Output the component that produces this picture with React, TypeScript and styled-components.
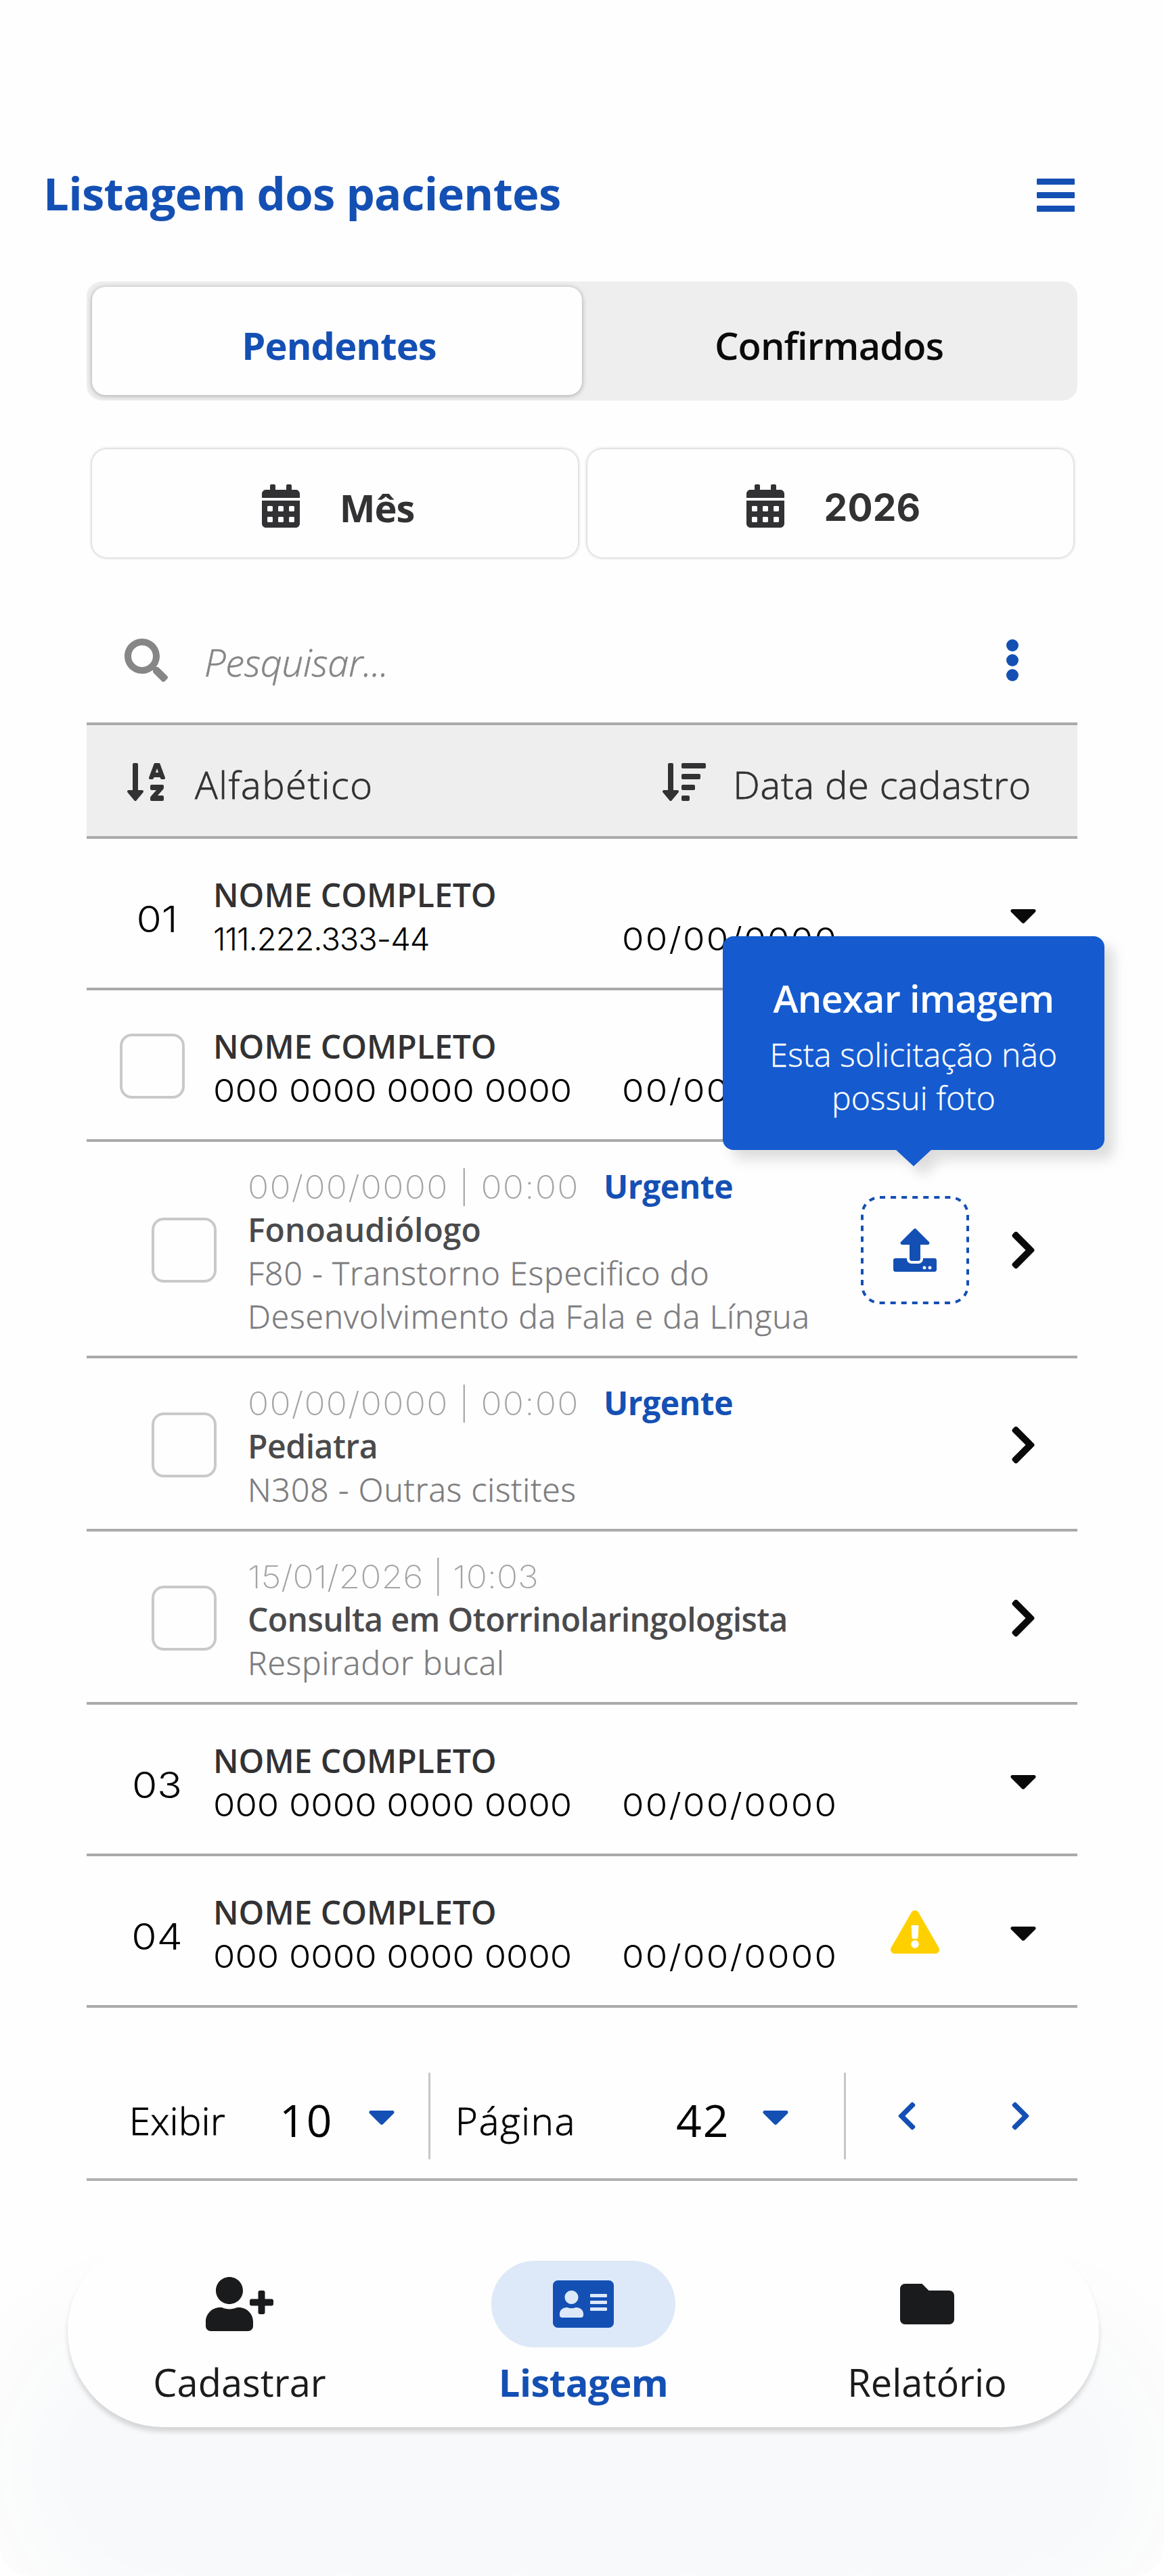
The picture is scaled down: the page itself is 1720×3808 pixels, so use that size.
import React from "react";
import styled, { createGlobalStyle } from "styled-components";
import {
  FaAddressCard,
  FaCalendarAlt,
  FaCaretDown,
  FaChevronLeft,
  FaChevronRight,
  FaExclamationTriangle,
  FaFolder,
  FaSearch,
  FaSortAlphaDown,
  FaSortAmountDown,
  FaUpload,
  FaUserPlus,
} from "react-icons/fa";

const color = {
  primary: "#1450b4",
  tooltip: "#155bcf",
  ink: "#323234",
  soft: "#4a4a4c",
  muted: "#757577",
  faint: "#a9a9a9",
  rule: "#aaaaaa",
  surface: "#eeeeee",
};

const text = `"Open Sans", "Noto Sans", sans-serif`;
const digits = `Inter, "Open Sans", sans-serif`;

const GlobalStyle = createGlobalStyle`
  *, *::before, *::after { box-sizing: border-box; }
  body { margin: 0; background: #fff; font-family: ${text}; color: #000; }
  button { border: 0; background: none; padding: 0; margin: 0; font: inherit; color: inherit; }
`;

const Page = styled.div`
  display: flex;
  flex-direction: column;
  width: 1720px;
  height: 3808px;
  overflow: hidden;
  background: #fefefe;
  border-radius: 0 0 44px 44px;
`;

const Header = styled.header`
  display: flex;
  align-items: center;
  justify-content: space-between;
  height: 324px;
  padding: 246px 132px 0 64px;
`;

const Title = styled.h1`
  margin: 0;
  font-size: 67px;
  line-height: 80px;
  font-weight: 700;
  letter-spacing: -0.69px;
  color: ${color.primary};
`;

const MenuButton = styled.button`
  display: flex;
  flex-direction: column;
  gap: 11px;
  margin-top: 6px;
  span {
    width: 56px;
    height: 9px;
    border-radius: 1px;
    background: ${color.primary};
  }
`;

const Content = styled.main`
  display: flex;
  flex-direction: column;
  margin: 92px 128px 0;
`;

const Tabs = styled.div`
  display: grid;
  grid-template-columns: 1fr 1fr;
  height: 176px;
  padding: 8px;
  border-radius: 22px;
  background: ${color.surface};
`;

const Tab = styled.button<{ $active?: boolean }>`
  padding: 12px 0 0 6px;
  border-radius: 20px;
  font-size: 56px;
  line-height: 76px;
  font-weight: ${(p) => (p.$active ? 700 : 600)};
  letter-spacing: ${(p) => (p.$active ? "-0.9px" : "-0.85px")};
  color: ${(p) => (p.$active ? color.primary : "#0b0b0b")};
  background: ${(p) => (p.$active ? "#fefefe" : "transparent")};
  box-shadow: ${(p) => (p.$active ? "0 1px 7px rgba(0, 0, 0, 0.32)" : "none")};
`;

const Filters = styled.div`
  display: grid;
  grid-template-columns: 718px 718px;
  gap: 14px;
  margin: 72px 0 0 8px;
`;

const FilterButton = styled.button`
  display: flex;
  align-items: center;
  justify-content: center;
  gap: 59px;
  height: 160px;
  padding: 8px 0 0 9px;
  border-radius: 22px;
  background: #fefefe;
  box-shadow: 0 0 5px rgba(0, 0, 0, 0.3);
  color: ${color.ink};
  svg {
    width: 56px;
    height: 64px;
  }
`;

const FilterLabel = styled.span<{ $digits?: boolean }>`
  padding-top: 4px;
  font-family: ${(p) => (p.$digits ? digits : text)};
  font-size: ${(p) => (p.$digits ? 55 : 56)}px;
  font-weight: ${(p) => (p.$digits ? 650 : 700)};
  letter-spacing: ${(p) => (p.$digits ? "0.2px" : "-1px")};
`;

const SearchBar = styled.div`
  display: flex;
  align-items: center;
  height: 184px;
  margin-top: 60px;
  padding: 0 87px 0 56px;
  > svg {
    width: 64px;
    height: 64px;
    color: #868686;
  }
`;

const SearchHint = styled.span`
  flex: 1;
  padding: 4px 0 0 54px;
  font-size: 56px;
  font-style: italic;
  font-weight: 300;
  -webkit-text-stroke: 0.6px currentColor;
  letter-spacing: -0.1px;
  color: #868686;
`;

const MoreButton = styled.button`
  display: flex;
  flex-direction: column;
  gap: 4px;
  span {
    width: 18px;
    height: 18px;
    border-radius: 50%;
    background: ${color.primary};
  }
`;

const SortBar = styled.div`
  display: flex;
  align-items: center;
  height: 172px;
  padding: 4px 68px 0 60px;
  border-top: 4px solid ${color.rule};
  border-bottom: 4px solid ${color.rule};
  background: ${color.surface};
`;

const SortOption = styled.button<{ $iconWidth: number; $gap: number; $spacing: number }>`
  display: flex;
  align-items: center;
  gap: ${(p) => p.$gap}px;
  font-size: 56px;
  font-weight: 300;
  -webkit-text-stroke: 0.8px currentColor;
  letter-spacing: ${(p) => p.$spacing}px;
  white-space: nowrap;
  color: ${color.ink};
  &:last-child {
    margin-left: auto;
  }
  svg {
    width: ${(p) => p.$iconWidth}px;
    height: 64px;
  }
  span {
    padding-top: 5px;
  }
`;

const PatientRow = styled.div`
  display: grid;
  grid-template-columns: 187px 604px 353px 160px 160px;
  align-items: center;
  height: 224px;
  border-bottom: 4px solid ${color.rule};
`;

const Lead = styled.div<{ $inset?: boolean }>`
  padding: ${(p) => (p.$inset ? "4px 0 0 96px" : "4px 0 0 49px")};
`;

const RowNumber = styled.div`
  margin: 16px 0 0 21px;
  text-align: center;
  font-family: ${digits};
  font-size: 54px;
  font-weight: 300;
  transform: scaleX(1.12);
`;

const Checkbox = styled.div`
  width: 96px;
  height: 96px;
  border: 4px solid #c9c9c9;
  border-radius: 18px;
  background: #fefefe;
`;

const Lines = styled.div<{ $top: number }>`
  display: flex;
  flex-direction: column;
  padding-top: ${(p) => p.$top}px;
`;

const PatientName = styled.div`
  font-size: 48px;
  line-height: 64px;
  font-weight: 600;
  color: ${color.ink};
`;

const Digits = styled.div<{ $spacing: number; $stretch?: number }>`
  height: 64px;
  font-family: ${digits};
  font-size: 47px;
  line-height: 65px;
  font-weight: 300;
  letter-spacing: ${(p) => p.$spacing}px;
  white-space: nowrap;
  transform: scaleX(${(p) => p.$stretch ?? 1});
  transform-origin: left;
`;

const RegisterDate = styled(Digits)`
  margin-top: 73px;
`;

const IconCell = styled.div<{ $w: number; $h: number; $color?: string }>`
  position: relative;
  display: flex;
  align-items: center;
  justify-content: center;
  padding-top: 4px;
  color: ${(p) => p.$color ?? "#0a0a0a"};
  > svg {
    width: ${(p) => p.$w}px;
    height: ${(p) => p.$h}px;
  }
`;

const RequestRow = styled.div<{ $height: number }>`
  display: grid;
  grid-template-columns: 238px 906px 160px 160px;
  align-items: center;
  height: ${(p) => p.$height}px;
  border-bottom: 4px solid ${color.rule};
`;

const RequestHead = styled.div`
  display: flex;
  gap: 27px;
  height: 64px;
`;

const RequestDate = styled(Digits)`
  flex: 0 0 499px;
  font-weight: 250;
  color: #a4a4a4;
`;

const Urgent = styled.span`
  font-size: 48px;
  line-height: 64px;
  font-weight: 700;
  letter-spacing: -0.45px;
  color: ${color.primary};
`;

const Specialty = styled.div<{ $spacing: number }>`
  font-size: 48px;
  line-height: 64px;
  font-weight: 600;
  letter-spacing: ${(p) => p.$spacing}px;
  white-space: nowrap;
  color: ${color.soft};
`;

const Diagnosis = styled.div`
  font-size: 48px;
  line-height: 64px;
  font-weight: 300;
  -webkit-text-stroke: 0.6px currentColor;
  letter-spacing: 0.95px;
  white-space: nowrap;
  color: #7c7c7e;
`;

const UploadButton = styled.button`
  display: grid;
  place-items: center;
  width: 160px;
  height: 160px;
  color: ${color.primary};
  > svg {
    grid-area: 1 / 1;
  }
  > svg:last-child {
    width: 64px;
    height: 64px;
  }
`;

const Tooltip = styled.div`
  position: absolute;
  z-index: 2;
  right: -200px;
  bottom: calc(100% + 64px);
  width: 564px;
  height: 316px;
  padding-top: 51px;
  border-radius: 16px;
  background: ${color.tooltip};
  color: #fff;
  text-align: center;
  filter: drop-shadow(14px 14px 9px rgba(0, 0, 0, 0.13));
  &::after {
    content: "";
    position: absolute;
    top: calc(100% - 1px);
    left: 255px;
    border: 27px solid transparent;
    border-top: 25px solid ${color.tooltip};
    border-bottom: 0;
  }
`;

const TooltipTitle = styled.div`
  font-size: 56px;
  line-height: 80px;
  font-weight: 600;
  letter-spacing: -0.78px;
`;

const TooltipText = styled.div`
  margin-top: 12px;
  font-size: 48px;
  line-height: 64px;
  font-weight: 300;
  -webkit-text-stroke: 0.4px currentColor;
  letter-spacing: 0.2px;
`;

const Pager = styled.div`
  display: flex;
  height: 256px;
  padding: 96px 0 28px;
  border-bottom: 4px solid #b0b0b0;
`;

const PagerGroup = styled.div<{ $width: number; $start: number }>`
  display: flex;
  align-items: center;
  flex: 0 0 ${(p) => p.$width}px;
  padding-left: ${(p) => p.$start}px;
  border-right: 3px solid #c6c6c6;
  > svg {
    width: 40px;
    height: 64px;
    color: ${color.primary};
  }
`;

const PagerLabel = styled.span<{ $width: number; $spacing: number }>`
  width: ${(p) => p.$width}px;
  padding-top: 11px;
  font-size: 56px;
  font-weight: 300;
  -webkit-text-stroke: 0.8px currentColor;
  letter-spacing: ${(p) => p.$spacing}px;
`;

const PagerValue = styled.span<{ $width: number }>`
  width: ${(p) => p.$width}px;
  padding-top: 10px;
  font-size: 66px;
  line-height: 80px;
  font-weight: 400;
  letter-spacing: 2px;
`;

const PagerArrows = styled.div`
  display: flex;
  align-items: center;
  gap: 104px;
  padding-left: 58px;
  color: ${color.primary};
  svg {
    width: 64px;
    height: 48px;
  }
`;

const BottomNav = styled.nav`
  display: grid;
  grid-template-columns: repeat(3, 1fr);
  flex: none;
  width: 1524px;
  height: 284px;
  margin: 80px 0 0 100px;
  padding-top: 38px;
  border-radius: 142px;
  background: #fefefe;
  box-shadow:
    0 7px 7px rgba(0, 0, 0, 0.14),
    0 200px 160px 110px rgba(20, 60, 120, 0.026);
`;

const NavItem = styled.button<{ $active?: boolean }>`
  display: flex;
  flex-direction: column;
  align-items: center;
  gap: 18px;
  color: ${(p) => (p.$active ? color.primary : "#1a1b1c")};
`;

const NavIcon = styled.span<{ $active?: boolean; $width: number }>`
  display: flex;
  align-items: center;
  justify-content: center;
  width: 272px;
  height: 128px;
  border-radius: 64px;
  background: ${(p) => (p.$active ? "#dde9f9" : "transparent")};
  svg {
    width: ${(p) => p.$width}px;
    height: 80px;
  }
`;

const NavLabel = styled.span<{ $active?: boolean }>`
  padding-top: 1px;
  font-size: 56px;
  line-height: 64px;
  font-weight: ${(p) => (p.$active ? 700 : 400)};
  letter-spacing: ${(p) => (p.$active ? "-0.5px" : "0")};
`;

type PatientProps = {
  number?: string;
  document: string;
  spacing?: number;
  stretch?: number;
  alert?: boolean;
};

function Patient({ number, document, spacing = 0, stretch = 1.116, alert }: PatientProps) {
  return (
    <PatientRow>
      {number ? <RowNumber>{number}</RowNumber> : <Lead><Checkbox /></Lead>}
      <Lines $top={10}>
        <PatientName>NOME COMPLETO</PatientName>
        <Digits $spacing={spacing} $stretch={stretch}>{document}</Digits>
      </Lines>
      <RegisterDate $spacing={2} $stretch={1.12}>00/00/0000</RegisterDate>
      <IconCell $w={72} $h={64} $color="#ffd000">{alert && <FaExclamationTriangle />}</IconCell>
      <IconCell $w={40} $h={64}><FaCaretDown /></IconCell>
    </PatientRow>
  );
}

type RequestProps = {
  date: string;
  dateSpacing: number;
  urgent?: boolean;
  specialty: string;
  specialtySpacing: number;
  diagnosis: string[];
  upload?: boolean;
};

function Request(r: RequestProps) {
  return (
    <RequestRow $height={192 + 64 * r.diagnosis.length}>
      <Lead $inset><Checkbox /></Lead>
      <Lines $top={8}>
        <RequestHead>
          <RequestDate $spacing={r.dateSpacing} $stretch={1.1}>{r.date}</RequestDate>
          {r.urgent && <Urgent>Urgente</Urgent>}
        </RequestHead>
        <Specialty $spacing={r.specialtySpacing}>{r.specialty}</Specialty>
        {r.diagnosis.map((line) => <Diagnosis key={line}>{line}</Diagnosis>)}
      </Lines>
      <IconCell $w={64} $h={64}>
        {r.upload && (
          <>
            <UploadButton>
              <svg width="160" height="160" viewBox="0 0 160 160" fill="none">
                <rect x="2" y="2" width="156" height="156" rx="26" stroke="currentColor" strokeWidth="4" pathLength="576" strokeDasharray="8 8" />
              </svg>
              <FaUpload />
            </UploadButton>
            <Tooltip>
              <TooltipTitle>Anexar imagem</TooltipTitle>
              <TooltipText>Esta solicitação não<br />possui foto</TooltipText>
            </Tooltip>
          </>
        )}
      </IconCell>
      <IconCell $w={40} $h={64}><FaChevronRight /></IconCell>
    </RequestRow>
  );
}

export default function App() {
  return (
    <>
      <GlobalStyle />
      <Page>
        <Header>
          <Title>Listagem dos pacientes</Title>
          <MenuButton aria-label="Menu"><span /><span /><span /></MenuButton>
        </Header>
        <Content>
          <Tabs>
            <Tab $active>Pendentes</Tab>
            <Tab>Confirmados</Tab>
          </Tabs>
          <Filters>
            <FilterButton><FaCalendarAlt /><FilterLabel>Mês</FilterLabel></FilterButton>
            <FilterButton><FaCalendarAlt /><FilterLabel $digits>2026</FilterLabel></FilterButton>
          </Filters>
          <SearchBar>
            <FaSearch />
            <SearchHint>Pesquisar...</SearchHint>
            <MoreButton aria-label="Mais"><span /><span /><span /></MoreButton>
          </SearchBar>
          <SortBar>
            <SortOption $iconWidth={56} $gap={44} $spacing={1.6}><FaSortAlphaDown /><span>Alfabético</span></SortOption>
            <SortOption $iconWidth={64} $gap={40} $spacing={0.7}><FaSortAmountDown /><span>Data de cadastro</span></SortOption>
          </SortBar>
          <Patient number="01" document="111.222.333-44" spacing={-0.99} stretch={1} />
          <Patient document="000 0000 0000 0000" />
          <Request
            date="00/00/0000 | 00:00" dateSpacing={1.1} urgent
            specialty="Fonoaudiólogo" specialtySpacing={0.05}
            diagnosis={["F80 - Transtorno Especifico do", "Desenvolvimento da Fala e da Língua"]}
            upload
          />
          <Request
            date="00/00/0000 | 00:00" dateSpacing={1.1} urgent
            specialty="Pediatra" specialtySpacing={-0.47}
            diagnosis={["N308 - Outras cistites"]}
          />
          <Request
            date="15/01/2026 | 10:03" dateSpacing={-0.1}
            specialty="Consulta em Otorrinolaringologista" specialtySpacing={-0.59}
            diagnosis={["Respirador bucal"]}
          />
          <Patient number="03" document="000 0000 0000 0000" />
          <Patient number="04" document="000 0000 0000 0000" alert />
          <Pager>
            <PagerGroup $width={508} $start={63}>
              <PagerLabel $width={222} $spacing={0.5}>Exibir</PagerLabel>
              <PagerValue $width={131}>10</PagerValue>
              <FaCaretDown />
            </PagerGroup>
            <PagerGroup $width={614} $start={37}>
              <PagerLabel $width={326} $spacing={1.9}>Página</PagerLabel>
              <PagerValue $width={127}>42</PagerValue>
              <FaCaretDown />
            </PagerGroup>
            <PagerArrows><FaChevronLeft /><FaChevronRight /></PagerArrows>
          </Pager>
        </Content>
        <BottomNav>
          <NavItem><NavIcon $width={100}><FaUserPlus /></NavIcon><NavLabel>Cadastrar</NavLabel></NavItem>
          <NavItem $active><NavIcon $active $width={90}><FaAddressCard /></NavIcon><NavLabel $active>Listagem</NavLabel></NavItem>
          <NavItem><NavIcon $width={80}><FaFolder /></NavIcon><NavLabel>Relatório</NavLabel></NavItem>
        </BottomNav>
      </Page>
    </>
  );
}
